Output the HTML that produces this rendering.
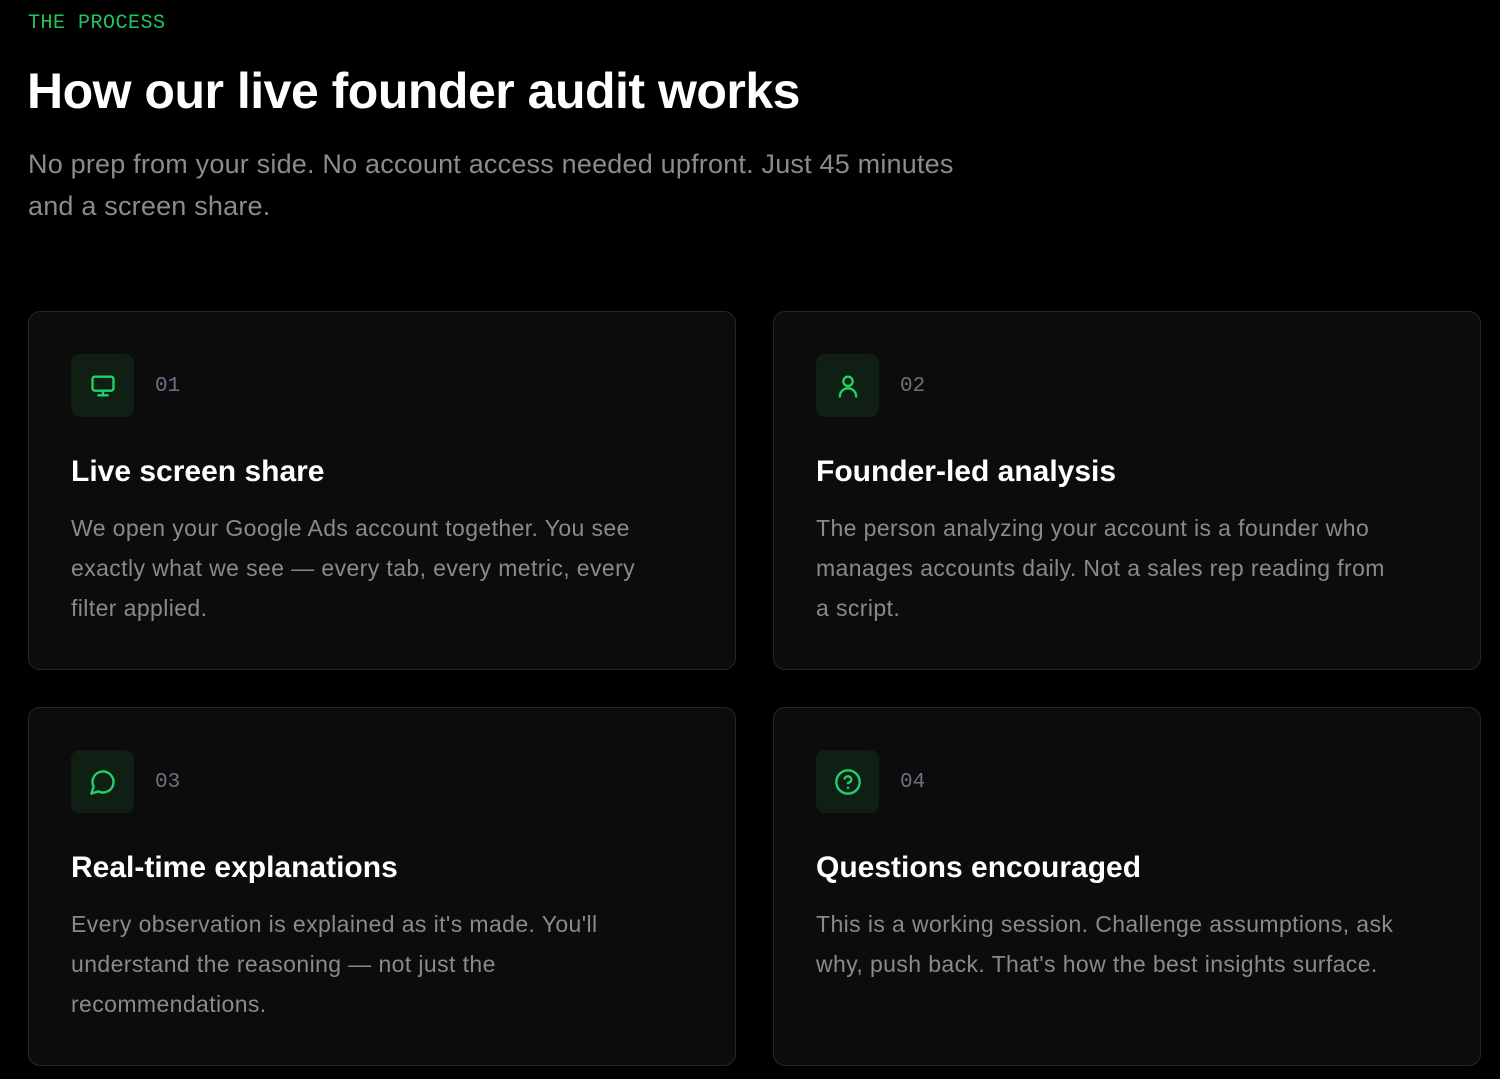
<!DOCTYPE html><html><head><style>
body{margin:0;background:#000;width:1500px;height:1079px;overflow:hidden;font-family:"Liberation Sans",sans-serif;}
.eyebrow{position:absolute;left:28px;top:12px;font-family:"Liberation Mono",monospace;color:#22c55e;font-size:20px;letter-spacing:0.5px}
h1{position:absolute;left:27px;top:62px;margin:0;color:#fff;font-size:50px;font-weight:700;letter-spacing:-0.5px}
.intro{position:absolute;left:28px;top:143px;width:960px;color:#8b8b8b;font-size:27px;line-height:42px;letter-spacing:0.2px}
.card{position:absolute;width:708px;height:359px;background:#0c0c0c;border:1px solid #262626;border-radius:12px;box-sizing:border-box}
.ic{position:absolute;left:42px;top:42px;width:63px;height:63px;border-radius:9px;background:#0f1f14;display:flex;align-items:center;justify-content:center}
.num{position:absolute;left:126px;top:63px;font-family:"Liberation Mono",monospace;color:#6b7280;font-size:21px}
.t{position:absolute;left:42px;top:143px;color:#fff;font-size:30px;font-weight:700}
.d{position:absolute;left:42px;top:196px;width:585px;color:#8a8a8a;font-size:23px;line-height:40px;letter-spacing:0.4px}
</style></head><body>
<div class="eyebrow">THE PROCESS</div>
<h1>How our live founder audit works</h1>
<div class="intro">No prep from your side. No account access needed upfront. Just 45 minutes and a screen share.</div>

<div class="card" style="left:28px;top:311px">
<div class="ic"><svg width="28" height="28" viewBox="0 0 24 24" fill="none" stroke="#22d36a" stroke-width="2" stroke-linecap="round" stroke-linejoin="round"><rect x="3" y="4" width="18" height="12" rx="2"/><path d="M12 16v4M8 20h8"/></svg></div>
<div class="num">01</div><div class="t">Live screen share</div>
<div class="d">We open your Google Ads account together. You see exactly what we see — every tab, every metric, every filter applied.</div></div>

<div class="card" style="left:773px;top:311px">
<div class="ic"><svg width="28" height="28" viewBox="0 0 24 24" fill="none" stroke="#22d36a" stroke-width="2" stroke-linecap="round" stroke-linejoin="round"><circle cx="12" cy="8" r="4"/><path d="M5 21a7 7 0 0 1 14 0"/></svg></div>
<div class="num">02</div><div class="t">Founder-led analysis</div>
<div class="d">The person analyzing your account is a founder who manages accounts daily. Not a sales rep reading from a script.</div></div>

<div class="card" style="left:28px;top:707px">
<div class="ic"><svg width="28" height="28" viewBox="0 0 24 24" fill="none" stroke="#22d36a" stroke-width="2" stroke-linecap="round" stroke-linejoin="round"><path d="M7.9 20A9 9 0 1 0 4 16.1L2 22z"/></svg></div>
<div class="num">03</div><div class="t">Real-time explanations</div>
<div class="d">Every observation is explained as it's made. You'll understand the reasoning — not just the recommendations.</div></div>

<div class="card" style="left:773px;top:707px">
<div class="ic"><svg width="28" height="28" viewBox="0 0 24 24" fill="none" stroke="#22d36a" stroke-width="2" stroke-linecap="round" stroke-linejoin="round"><circle cx="12" cy="12" r="10"/><path d="M9.1 9a3 3 0 0 1 5.8 1c0 2-3 3-3 3M12 17h.01"/></svg></div>
<div class="num">04</div><div class="t">Questions encouraged</div>
<div class="d">This is a working session. Challenge assumptions, ask why, push back. That's how the best insights surface.</div></div>
</body></html>
